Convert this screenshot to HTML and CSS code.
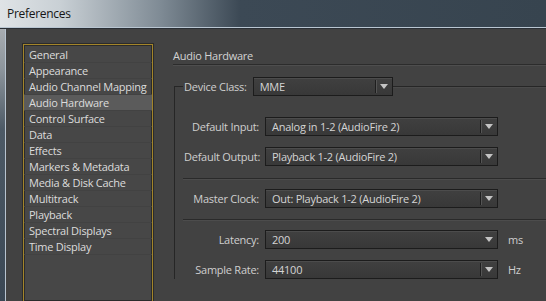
FILE: index.html
```html
<!DOCTYPE html>
<html>
<head>
<meta charset="utf-8">
<title>Preferences</title>
<link rel="stylesheet" href="styles.css">
</head>
<body>
<div class="win">
  <div class="titlebar"><span class="title">Preferences</span></div>
  <div class="body">
    <div class="frame"></div>
    <div class="client">
      <ul class="nav">
        <li>General</li>
        <li>Appearance</li>
        <li>Audio Channel Mapping</li>
        <li class="on">Audio Hardware</li>
        <li>Control Surface</li>
        <li>Data</li>
        <li>Effects</li>
        <li>Markers &amp; Metadata</li>
        <li>Media &amp; Disk Cache</li>
        <li>Multitrack</li>
        <li>Playback</li>
        <li>Spectral Displays</li>
        <li>Time Display</li>
      </ul>
      <div class="panel">
        <div class="heading">Audio Hardware</div>
        <div class="group">
          <div class="group-head">
            <span class="corner"></span>
            <span class="head-label">Device Class:</span>
            <div class="combo combo-class"><span>MME</span><i class="sep"></i><i class="arrow"></i></div>
            <span class="rule"></span>
          </div>
          <div class="group-body">
            <div class="row">
              <span class="lbl">Default Input:</span>
              <div class="combo"><span>Analog in 1-2 (AudioFire 2)</span><i class="sep"></i><i class="arrow"></i></div>
            </div>
            <div class="row">
              <span class="lbl">Default Output:</span>
              <div class="combo"><span>Playback 1-2 (AudioFire 2)</span><i class="sep"></i><i class="arrow"></i></div>
            </div>
            <div class="divider"></div>
            <div class="row">
              <span class="lbl">Master Clock:</span>
              <div class="combo"><span>Out: Playback 1-2 (AudioFire 2)</span><i class="sep"></i><i class="arrow"></i></div>
            </div>
            <div class="divider"></div>
            <div class="row">
              <span class="lbl">Latency:</span>
              <div class="combo"><span>200</span><i class="arrow"></i></div>
              <span class="unit">ms</span>
            </div>
            <div class="row">
              <span class="lbl">Sample Rate:</span>
              <div class="combo"><span>44100</span><i class="sep"></i><i class="arrow"></i></div>
              <span class="unit">Hz</span>
            </div>
          </div>
        </div>
      </div>
    </div>
  </div>
</div>
</body>
</html>
```

FILE: styles.css
```css
*{box-sizing:border-box;}
html,body{margin:0;padding:0;}
body{width:546px;height:301px;overflow:hidden;background:#434343;font:11px/16px 'Open Sans','DejaVu Sans',sans-serif;letter-spacing:-0.25px;color:#cfcfcf;}
ul,li{margin:0;padding:0;list-style:none;}

.win{display:flex;flex-direction:column;height:301px;}
.titlebar{height:29px;flex:none;padding:6px 0 0 7px;border-bottom:1px solid #2a2f35;
  background:linear-gradient(90deg,#dfe3e6 0,#c9d0d5 60px,#7f8b95 160px,#3c4955 240px,#37444f 100%);
  box-shadow:inset 0 -1px 0 #b9c6d2;}
.title{font-size:12px;line-height:16px;letter-spacing:-0.3px;color:#151515;}

.body{flex:1;display:flex;min-height:0;}
.frame{width:6px;flex:none;border-right:1px solid #b7c3cf;
  background:linear-gradient(180deg,#a8adb1 0,#8d959c 40px,#4d5a66 100px,#3a4754 100%);}
.client{flex:1;display:flex;align-items:stretch;padding:15px 0 0 17px;background:#424242;overflow:hidden;}

.nav{width:130px;flex:none;padding-top:2px;background:#474747;
  border:1px solid #a3852a;border-bottom:none;box-shadow:0 0 0 1px #2b2b2b,inset 0 0 0 1px #2b2b2b;}
.nav li{height:16px;padding-left:5px;color:#dcdcdc;white-space:nowrap;border-bottom:1px solid #424242;line-height:15px;}
.nav li.on{background:#5b5b5b;}

.panel{flex:1;align-self:flex-start;margin-left:20px;}
.heading{padding-top:4px;line-height:16px;padding-bottom:0;border-bottom:1px solid #2c2c2c;box-shadow:0 1px 0 #4e4e4e;color:#d2d2d2;}

.group{margin:12px 0 0 1px;}
.group-head{display:flex;align-items:center;height:19px;}
.corner{align-self:flex-end;width:9px;height:10px;border-top:1px solid #262626;border-left:1px solid #262626;}
.head-label{margin-left:1px;white-space:nowrap;}
.rule{flex:1;border-top:1px solid #262626;box-shadow:0 1px 0 #4a4a4a;}
.group-body{border-left:1px solid #262626;padding:21px 0 0 9px;}

.row{display:flex;align-items:center;height:19px;margin-bottom:11px;}
.row:nth-child(2){margin-bottom:12px;}
.row:nth-child(5){margin-bottom:10px;}
.lbl{width:75px;flex:none;text-align:right;white-space:nowrap;}
.unit{margin-left:10px;}
.divider{height:1px;margin:0 0 10px -1px;background:#2a2a2a;box-shadow:0 1px 0 #4c4c4c;}

.combo{display:flex;align-items:center;height:19px;width:233px;flex:none;margin-left:6px;padding-left:6px;
  border:1px solid #1c1c1c;background:linear-gradient(180deg,#404040,#383838);box-shadow:inset 0 1px 0 #4c4c4c;color:#d4d4d4;}
.combo span{flex:1;white-space:nowrap;}
.combo-class{width:140px;margin-left:6px;}
.combo .sep{width:1px;height:13px;background:#1e1e1e;box-shadow:1px 0 0 #555;margin-right:4px;}
.combo .arrow{width:0;height:0;border-left:4px solid transparent;border-right:4px solid transparent;border-top:5px solid #c4c4c4;margin-right:4px;}
```
